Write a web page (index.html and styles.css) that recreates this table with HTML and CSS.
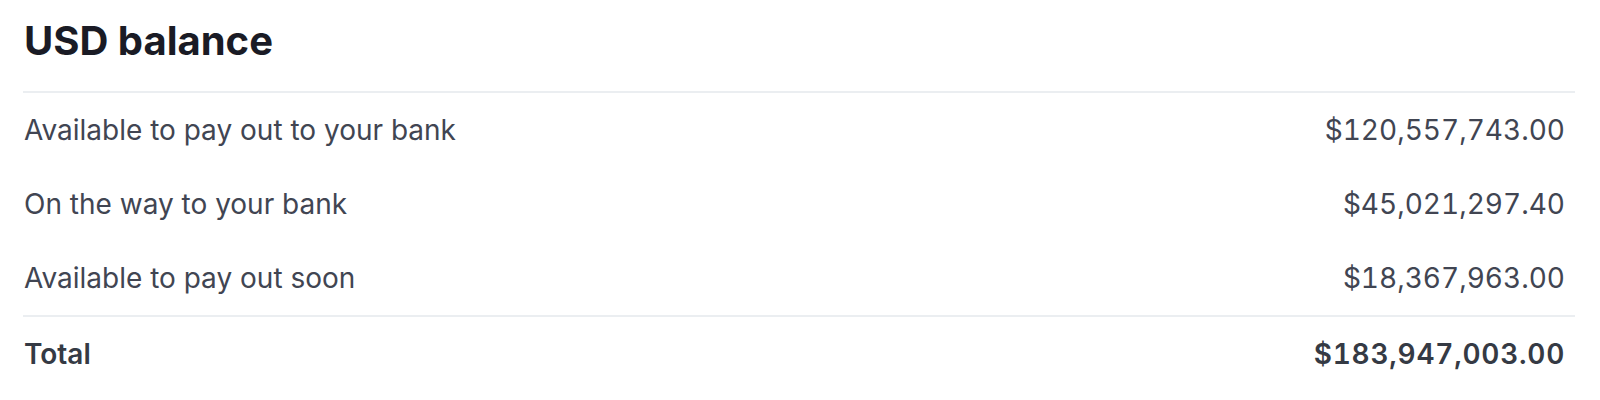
FILE: index.html
```html
<!DOCTYPE html>
<html>
<head>
<meta charset="utf-8">
<link rel="stylesheet" href="styles.css">
</head>
<body>
<section class="balance">
  <h1 class="title">USD balance</h1>
  <div class="rows">
    <div class="row">
      <span class="label">Available to pay out to your bank</span>
      <span class="amount">$120,557,743.00</span>
    </div>
    <div class="row">
      <span class="label">On the way to your bank</span>
      <span class="amount">$45,021,297.40</span>
    </div>
    <div class="row">
      <span class="label">Available to pay out soon</span>
      <span class="amount">$18,367,963.00</span>
    </div>
    <div class="row total">
      <span class="label">Total</span>
      <span class="amount">$183,947,003.00</span>
    </div>
  </div>
</section>
</body>
</html>
```

FILE: styles.css
```css
html, body {
  margin: 0;
  padding: 0;
  background: #ffffff;
}
body {
  font-family: Inter, "Noto Sans", "Liberation Sans", sans-serif;
  width: 1600px;
  height: 400px;
  overflow: hidden;
}
.balance {
  padding: 0 25px 0 23px;
}
.title {
  margin: 0;
  height: 80px;
  display: flex;
  align-items: center;
  padding-left: 1px;
  font-size: 40px;
  font-weight: 700;
  color: #1a1b25;
}
.rows {
  border-top: 2px solid #ebeef1;
  margin-top: 11px;
}
.row {
  display: flex;
  justify-content: space-between;
  align-items: center;
  height: 74px;
  padding: 0 10px 0 1px;
  font-size: 28px;
  color: #414552;
}
.amount {
  font-variant-numeric: tabular-nums;
}
.total {
  border-top: 2px solid #ebeef1;
  font-weight: 600;
  color: #353a44;
}
.total .amount {
  letter-spacing: 0.75px;
}
```
